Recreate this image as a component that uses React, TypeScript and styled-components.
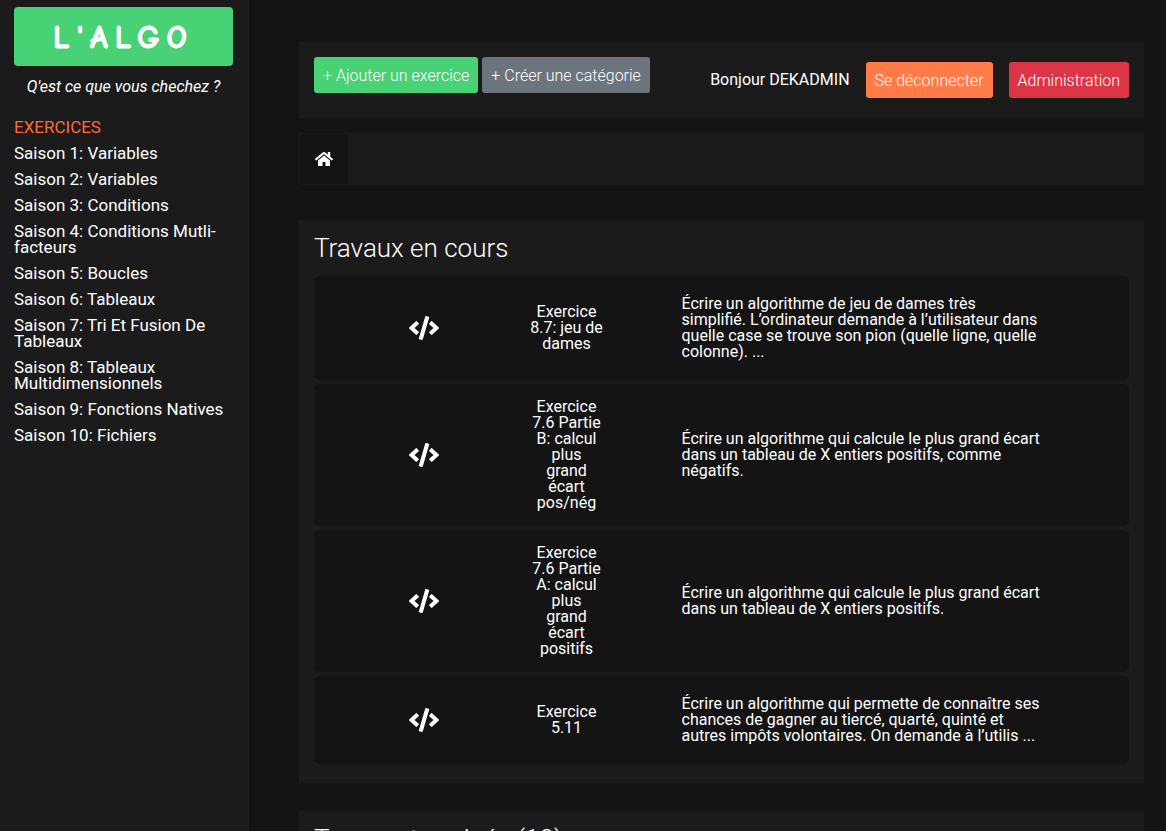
import React from "react";
import styled, { createGlobalStyle } from "styled-components";
import { FaCode, FaHome } from "react-icons/fa";

const GlobalStyle = createGlobalStyle`
  *, *::before, *::after { box-sizing: border-box; }
  body {
    margin: 0;
    background: #141414;
    color: #fff;
    font-family: Roboto, "Liberation Sans", sans-serif;
    font-size: 16px;
    line-height: 16px;
  }
  a { color: inherit; text-decoration: none; }
`;

const Page = styled.div`
  display: flex;
  height: 100vh;
  overflow: hidden;
`;

const Sidebar = styled.aside`
  flex: 0 0 249px;
  padding: 7px 15px 7px 14px;
  background: #1b1b1b;
  border-right: 1px solid #222;
  box-shadow: 1px 0 4px rgba(0, 0, 0, 0.5);
`;

const Logo = styled.a`
  display: flex;
  align-items: center;
  justify-content: center;
  height: 59px;
  padding-top: 2px;
  border-radius: 4px;
  background: #48d175;
  font-family: "Comic Sans MS", "Comic Neue", Lato, sans-serif;
  font-size: 32px;
  line-height: 40px;
  font-weight: 700;
  letter-spacing: 7px;
  -webkit-text-stroke: 1px #fff;
`;

const Tagline = styled.p`
  margin: 13px 0 24px;
  text-align: center;
  font-style: italic;
`;

const MenuTitle = styled.h2`
  margin: 0 0 10px;
  color: #ff6a3d;
  font-size: 17px;
  line-height: 16px;
  font-weight: 400;
`;

const Menu = styled.ul`
  display: flex;
  flex-direction: column;
  gap: 10px;
  margin: 0;
  padding: 0;
  list-style: none;
  font-size: 17px;
`;

const Main = styled.main`
  flex: 1;
  min-width: 0;
  padding: 42px 22px 0 50px;
  overflow: hidden;
`;

const TopBar = styled.header`
  display: flex;
  justify-content: space-between;
  min-height: 76px;
  padding: 15px;
  background: #1b1b1b;
`;

const Actions = styled.div`
  display: flex;
  align-items: flex-start;
  gap: 4px;
`;

const Account = styled.div`
  display: flex;
  align-items: center;
  gap: 16px;
`;

const Button = styled.button<{ $color: string }>`
  height: 36px;
  padding: 2px 9px 0;
  border: 0;
  border-radius: 3px;
  background: ${(p) => p.$color};
  color: #fff;
  font: 300 16px/24px Roboto, "Liberation Sans", sans-serif;
  cursor: pointer;
`;

const Breadcrumb = styled.nav`
  display: flex;
  height: 52px;
  margin: 15px 0 35px;
  background: #1b1b1b;
`;

const HomeLink = styled.a`
  display: flex;
  align-items: center;
  justify-content: center;
  width: 50px;
  border: 1px solid #1b1b1b;
  background: #141414;
  font-size: 18px;
`;

const Panel = styled.section`
  margin-bottom: 28px;
  padding: 12px 15px 19px;
  background: #1b1b1b;
`;

const PanelTitle = styled.h1`
  margin: 0 0 12px;
  font-size: 26px;
  line-height: 32px;
  font-weight: 300;
`;

const CardList = styled.div`
  display: flex;
  flex-direction: column;
  gap: 4px;
`;

const Card = styled.a`
  display: grid;
  grid-template-columns: 56px 76px minmax(0, 360px);
  gap: 77px;
  align-items: center;
  padding: 0 10%;
  border-radius: 6px;
  background: #141414;
`;

const CardIcon = styled.span`
  display: flex;
  justify-content: center;
  font-size: 30px;
`;

const CardTitle = styled.span`
  padding: 15px 1px;
  text-align: center;
`;

const CardText = styled.p`
  margin: 0;
  padding: 20px 0;
`;

const seasons = [
  "Saison 1: Variables",
  "Saison 2: Variables",
  "Saison 3: Conditions",
  "Saison 4: Conditions Mutli-facteurs",
  "Saison 5: Boucles",
  "Saison 6: Tableaux",
  "Saison 7: Tri Et Fusion De Tableaux",
  "Saison 8: Tableaux Multidimensionnels",
  "Saison 9: Fonctions Natives",
  "Saison 10: Fichiers",
];

const exercises = [
  {
    title: "Exercice 8.7: jeu de dames",
    text: "Écrire un algorithme de jeu de dames très simplifié. L’ordinateur demande à l’utilisateur dans quelle case se trouve son pion (quelle ligne, quelle colonne). ...",
  },
  {
    title: "Exercice 7.6 Partie B: calcul plus grand écart pos/nég",
    text: "Écrire un algorithme qui calcule le plus grand écart dans un tableau de X entiers positifs, comme négatifs.",
  },
  {
    title: "Exercice 7.6 Partie A: calcul plus grand écart positifs",
    text: "Écrire un algorithme qui calcule le plus grand écart dans un tableau de X entiers positifs.",
  },
  {
    title: "Exercice 5.11",
    text: "Écrire un algorithme qui permette de connaître ses chances de gagner au tiercé, quarté, quinté et autres impôts volontaires. On demande à l’utilis ...",
  },
];

export default function App() {
  return (
    <>
      <GlobalStyle />
      <Page>
        <Sidebar>
          <Logo href="#">L'ALGO</Logo>
          <Tagline>Q'est ce que vous chechez ?</Tagline>
          <MenuTitle>EXERCICES</MenuTitle>
          <Menu>
            {seasons.map((s) => (
              <li key={s}>
                <a href="#">{s}</a>
              </li>
            ))}
          </Menu>
        </Sidebar>
        <Main>
          <TopBar>
            <Actions>
              <Button $color="#48d175">+ Ajouter un exercice</Button>
              <Button $color="#6c757d">+ Créer une catégorie</Button>
            </Actions>
            <Account>
              <span>Bonjour DEKADMIN</span>
              <Button $color="#ff7b47">Se déconnecter</Button>
              <Button $color="#dc3545">Administration</Button>
            </Account>
          </TopBar>
          <Breadcrumb aria-label="Fil d'Ariane">
            <HomeLink href="#" aria-label="Accueil">
              <FaHome />
            </HomeLink>
          </Breadcrumb>
          <Panel>
            <PanelTitle>Travaux en cours</PanelTitle>
            <CardList>
              {exercises.map((e) => (
                <Card href="#" key={e.title}>
                  <CardIcon>
                    <FaCode />
                  </CardIcon>
                  <CardTitle>{e.title}</CardTitle>
                  <CardText>{e.text}</CardText>
                </Card>
              ))}
            </CardList>
          </Panel>
          <Panel>
            <PanelTitle>Travaux terminés (10)</PanelTitle>
          </Panel>
        </Main>
      </Page>
    </>
  );
}
